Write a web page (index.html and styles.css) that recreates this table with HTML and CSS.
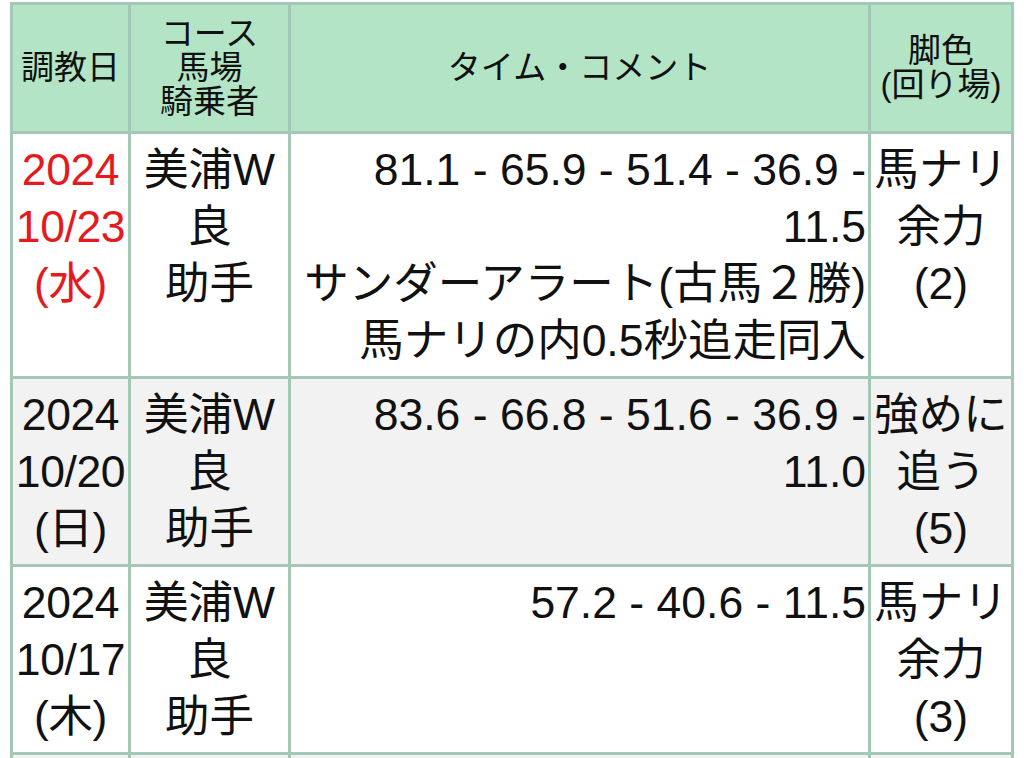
FILE: index.html
```html
<!DOCTYPE html>
<html lang="ja">
<head>
<meta charset="utf-8">
<title>調教</title>
<link rel="stylesheet" href="styles.css">
</head>
<body>
<table class="train">
  <colgroup>
    <col class="c-date">
    <col class="c-course">
    <col class="c-time">
    <col class="c-leg">
  </colgroup>
  <thead>
    <tr>
      <th>調教日</th>
      <th>コース<br>馬場<br>騎乗者</th>
      <th>タイム・コメント</th>
      <th>脚色<br>(回り場)</th>
    </tr>
  </thead>
  <tbody>
    <tr class="odd">
      <td class="date red">2024<br>10/23<br>(水)</td>
      <td class="center">美浦W<br>良<br>助手</td>
      <td class="time">81.1 - 65.9 - 51.4 - 36.9 - 11.5<br>サンダーアラート(古馬２勝)<br>馬ナリの内0.5秒追走同入</td>
      <td class="center">馬ナリ<br>余力<br>(2)</td>
    </tr>
    <tr class="even">
      <td class="date">2024<br>10/20<br>(日)</td>
      <td class="center">美浦W<br>良<br>助手</td>
      <td class="time">83.6 - 66.8 - 51.6 - 36.9 - 11.0</td>
      <td class="center">強めに<br>追う<br>(5)</td>
    </tr>
    <tr class="odd">
      <td class="date">2024<br>10/17<br>(木)</td>
      <td class="center">美浦W<br>良<br>助手</td>
      <td class="time">57.2 - 40.6 - 11.5</td>
      <td class="center">馬ナリ<br>余力<br>(3)</td>
    </tr>
    <tr class="even next">
      <td></td>
      <td></td>
      <td></td>
      <td></td>
    </tr>
  </tbody>
</table>
</body>
</html>
```

FILE: styles.css
```css
html, body {
  background: #ffffff;
}
body {
  margin: 2px 0 0 10px;
  font-family: "Liberation Sans", "Noto Sans CJK JP", sans-serif;
  color: #111111;
}
.train {
  table-layout: fixed;
  width: 1004px;
  border-collapse: collapse;
}
.c-date { width: 118px; }
.c-course { width: 160px; }
.c-time { width: 580px; }
.c-leg { width: 143px; }

.train th,
.train td {
  border: 3px solid #a5c7b5;
}
.train th {
  background: #b3e4c6;
  font-weight: normal;
  font-size: 33px;
  line-height: 34px;
  padding: 12px 1px;
  text-align: center;
  vertical-align: middle;
  white-space: nowrap;
}
.train td {
  font-size: 44.5px;
  line-height: 57px;
  padding: 7px 2px;
  vertical-align: top;
}
.train .next td {
  height: 120px;
}
.odd td { background: #ffffff; }
.even td { background: #f2f2f2; }
.date {
  text-align: center;
  white-space: nowrap;
  letter-spacing: -0.4px;
}
.red { color: #e51a1f; }
.center {
  text-align: center;
  white-space: nowrap;
}
.time {
  text-align: right;
}
```
